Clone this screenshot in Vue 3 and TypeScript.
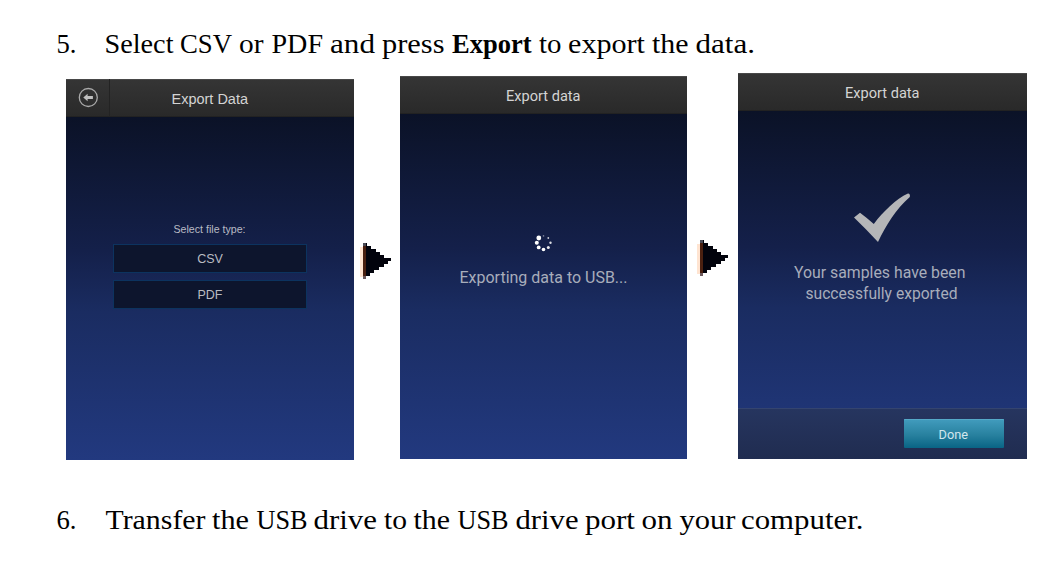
<script setup lang="ts">
interface Dot { x: number; y: number; r: number; o: number }
interface Word { t: string; x: number; w: number; bold?: boolean }

const dots: Dot[] = [
  { x: 5.3, y: 5, r: 2.4, o: 1 },
  { x: 3.3, y: 9.7, r: 2, o: 1 },
  { x: 5.2, y: 14.4, r: 1.9, o: 1 },
  { x: 10, y: 16.5, r: 1.8, o: 1 },
  { x: 14.8, y: 14.5, r: 1.5, o: 0.9 },
  { x: 17, y: 9.7, r: 1.2, o: 0.85 },
  { x: 14.8, y: 5, r: 0.9, o: 0.75 },
  { x: 10, y: 2.9, r: 0.8, o: 0.45 },
]

// widths of the stepped rows that make up the arrowhead
const arrowRows: number[] = [4, 8, 13, 17, 21, 28, 25, 21, 16, 11, 7, 3]

const exportStep: Word[] = [
  { t: '5.', x: 56.5, w: 20 },
  { t: 'Select', x: 104.5, w: 69 },
  { t: 'CSV', x: 180, w: 52 },
  { t: 'or', x: 239, w: 24.5 },
  { t: 'PDF', x: 271.5, w: 51.5 },
  { t: 'and', x: 330, w: 45 },
  { t: 'press', x: 382, w: 62.5 },
  { t: 'Export', x: 452, w: 79.5, bold: true },
  { t: 'to', x: 539, w: 22.5 },
  { t: 'export', x: 568, w: 77 },
  { t: 'the', x: 652, w: 36.5 },
  { t: 'data.', x: 695.5, w: 59.5 },
]
const transferStep: Word[] = [
  { t: '6.', x: 56.5, w: 20 },
  { t: 'Transfer', x: 105.5, w: 100 },
  { t: 'the', x: 212, w: 37 },
  { t: 'USB', x: 256.5, w: 51 },
  { t: 'drive', x: 313.5, w: 63.5 },
  { t: 'to', x: 384, w: 23 },
  { t: 'the', x: 413.5, w: 36.5 },
  { t: 'USB', x: 457.5, w: 51 },
  { t: 'drive', x: 515.5, w: 63 },
  { t: 'port', x: 585, w: 50 },
  { t: 'on', x: 641.5, w: 31 },
  { t: 'your', x: 679.5, w: 56 },
  { t: 'computer.', x: 741, w: 122.5 },
]
</script>

<template>
  <main class="page">
    <svg class="step" width="1063" height="72" viewBox="0 0 1063 72">
      <text y="53">
        <tspan v-for="(w, i) in exportStep" :key="i" :class="{ strong: w.bold }" :x="w.x" :textLength="w.w" lengthAdjust="spacingAndGlyphs">{{ w.t }}</tspan>
      </text>
    </svg>

    <section class="flow">
      <article class="screen first">
        <header class="bar">
          <span class="back">
            <svg width="22" height="22" viewBox="0 0 22 22">
              <circle cx="11.3" cy="10.5" r="9" fill="none" stroke="#aaa" stroke-width="1.3" />
              <path d="M6.3 10.5L10.6 6.8V9.1H15.9V11.9H10.6V14.2Z" fill="#c0c0c0" />
            </svg>
          </span>
          <svg class="title helv" width="244" height="38" viewBox="0 0 244 38">
            <text x="61.5" y="24.5" textLength="76.5" lengthAdjust="spacingAndGlyphs">Export Data</text>
          </svg>
        </header>
        <div class="picker">
          <svg class="label" width="194" height="20" viewBox="0 0 194 20">
            <text x="60.5" y="14" textLength="72" lengthAdjust="spacingAndGlyphs">Select file type:</text>
          </svg>
          <button class="option">CSV</button>
          <button class="option">PDF</button>
        </div>
      </article>

      <svg class="arrow a1" width="46" height="40" viewBox="0 0 46 40" shape-rendering="crispEdges">
        <rect x="6" y="6" width="3" height="30" fill="#ffe4d1" />
        <rect v-for="(w, i) in arrowRows" :key="i" x="9" :y="2 + i * 3" :width="w" height="3" fill="#02030c" />
        <rect x="9" y="5" width="3" height="30" fill="#4a2010" />
        <rect x="9" y="2" width="3" height="3" fill="#4b4b56" />
        <rect x="9" y="35" width="3" height="3" fill="#6d5a5c" />
      </svg>

      <article class="screen second">
        <header class="bar">
          <svg class="title" width="287" height="38" viewBox="0 0 287 38">
            <text x="106" y="25.3" textLength="74.5" lengthAdjust="spacingAndGlyphs">Export data</text>
          </svg>
        </header>
        <div class="progress">
          <svg width="20" height="20" viewBox="0.5 0 20 20">
            <circle v-for="(d, i) in dots" :key="i" :cx="d.x" :cy="d.y" :r="d.r" :opacity="d.o" fill="#fff" />
          </svg>
          <svg class="message" width="287" height="36" viewBox="0 0 287 36">
            <text x="59.5" y="30" textLength="168" lengthAdjust="spacingAndGlyphs">Exporting data to USB...</text>
          </svg>
        </div>
      </article>

      <svg class="arrow a2" width="51" height="40" viewBox="0 0 51 40" shape-rendering="crispEdges">
        <rect x="10" y="6" width="3" height="30" fill="#ffe4d1" />
        <rect v-for="(w, i) in arrowRows" :key="i" x="13" :y="2 + i * 3" :width="w" height="3" fill="#02030c" />
        <rect x="13" y="5" width="3" height="30" fill="#4a2010" />
        <rect x="13" y="2" width="3" height="3" fill="#4b4b56" />
        <rect x="13" y="35" width="3" height="3" fill="#6d5a5c" />
      </svg>

      <article class="screen third">
        <header class="bar">
          <svg class="title" width="289" height="38" viewBox="0 0 289 38">
            <text x="107" y="25.3" textLength="74.5" lengthAdjust="spacingAndGlyphs">Export data</text>
          </svg>
        </header>
        <div class="result">
          <svg width="58" height="52" viewBox="0 0 58 52">
            <path d="M0 25.5L6 20.8Q13 26 19.8 32C29 20 42 7 54 1.6Q56.5 2 55.8 5C42 17 31.5 34 24 50Q12 37 0 25.5Z" fill="#b5b6b8" />
          </svg>
          <svg class="message" width="289" height="50" viewBox="0 0 289 50">
            <text x="56" y="21" textLength="171.5" lengthAdjust="spacingAndGlyphs">Your samples have been</text>
            <text x="67.5" y="42" textLength="152" lengthAdjust="spacingAndGlyphs">successfully exported</text>
          </svg>
        </div>
        <footer class="foot">
          <button class="done">
            <svg width="100" height="29" viewBox="0 0 100 29">
              <text x="34.5" y="20" textLength="29.5" lengthAdjust="spacingAndGlyphs">Done</text>
            </svg>
          </button>
        </footer>
      </article>
    </section>

    <svg class="step" width="1063" height="90" viewBox="0 0 1063 90">
      <text y="69">
        <tspan v-for="(w, i) in transferStep" :key="i" :x="w.x" :textLength="w.w" lengthAdjust="spacingAndGlyphs">{{ w.t }}</tspan>
      </text>
    </svg>
  </main>
</template>

<style>
body { background: #fff; }
</style>

<style scoped>
.page { width: 1063px; height: 568px; overflow: hidden; }
svg { display: block; flex: none; }
button { font: inherit; border-radius: 0; cursor: pointer; }
.step { font: 27px "Palatino Linotype", Palatino, "Liberation Serif", serif; fill: #000; }
.strong { font-weight: 700; }
.flow { height: 388px; padding: 0 36px 0 66px; display: flex; align-items: flex-start; box-sizing: border-box; }
.screen { display: flex; flex-direction: column; flex: none; font-family: Roboto, sans-serif; background: linear-gradient(#0b1227 38px, #14204a 45%, #1a2c61 61%, #22397f); }
.first { width: 288px; height: 381px; margin-top: 7px; font-family: "Liberation Sans", Arial, sans-serif; }
.second { width: 287px; height: 383px; margin-top: 4px; }
.third { width: 289px; height: 386px; margin-top: 1px; }
.bar { height: 38px; display: flex; flex: none; box-sizing: border-box; background: linear-gradient(#353535, #292929); box-shadow: inset 0 1px #484848, inset 0 -1px #222; }
.back { width: 43px; display: flex; align-items: center; justify-content: center; border-right: 1px solid #232323; }
.title { fill: #d4d4d4; font-size: 15px; }
.helv { font-size: 14px; }
.picker { width: 194px; margin: 102px 0 0 47px; display: flex; flex-direction: column; }
.label { margin-bottom: 5px; font-size: 11px; fill: #b8bbc4; }
.option { height: 29px; margin-bottom: 7px; padding: 2px 0 0; border: 1px solid #0c335f; background: #0d152d; color: #b9bbc2; font-size: 12.5px; line-height: 25px; }
.arrow { margin-top: 169px; }
.a2 { margin-top: 166px; }
.progress { padding-top: 119px; display: flex; flex-direction: column; align-items: center; }
.message { font-size: 16.5px; fill: #a8adbb; }
.result { flex: 1; padding-top: 81px; display: flex; flex-direction: column; align-items: center; }
.result .message { margin-top: 13px; font-size: 16px; }
.foot { height: 51px; flex: none; box-sizing: border-box; padding: 10px 23px 0 0; display: flex; justify-content: flex-end; border-top: 1px solid #34446f; background: linear-gradient(#26355f, #202c50); }
.done { width: 100px; height: 29px; padding: 0; border: 0; border-radius: 1px; background: linear-gradient(#429cbe, #28819f 55%, #096485); box-shadow: inset 0 1px #55a9c7; fill: #d2e6ed; font-size: 13px; }
</style>
